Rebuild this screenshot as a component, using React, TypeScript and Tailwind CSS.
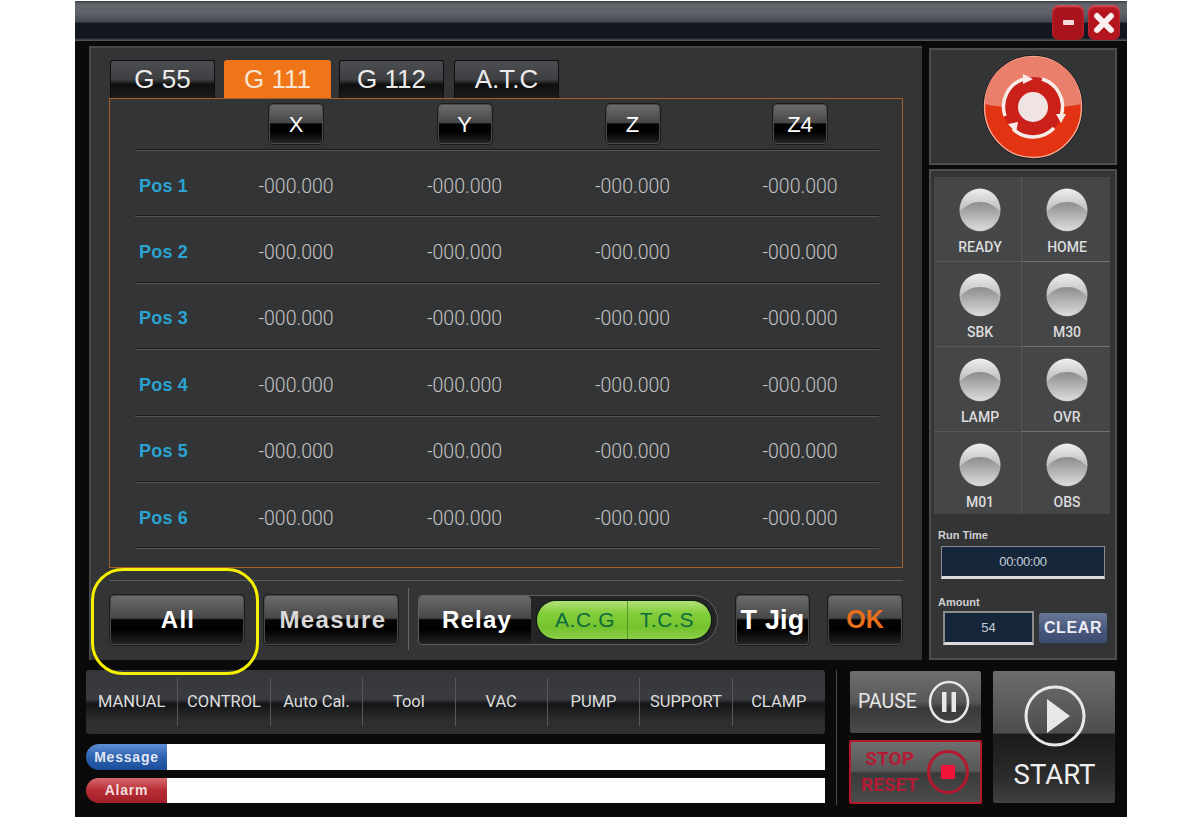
import React from "react";

const gloss =
  "bg-[linear-gradient(#6b6b6b_0%,#474747_46%,#050505_50%,#000_70%,#232323_100%)] border border-[#4a4a4a] shadow-[0_0_0_1px_#1c1c1c] rounded-[4px] text-white font-bold flex items-center justify-center";
const arial = "font-['Liberation_Sans',Arial,sans-serif]";
const roboto = "font-['Roboto','Liberation_Sans',sans-serif]";

function Led() {
  return (
    <svg width="42" height="44" viewBox="0 0 42 44" className="block">
      <defs>
        <linearGradient id="ledA" x1="0" y1="0" x2="0" y2="1">
          <stop offset="0" stopColor="#efefef" />
          <stop offset="1" stopColor="#8d8d8d" />
        </linearGradient>
        <linearGradient id="ledB" x1="0" y1="0" x2="0" y2="1">
          <stop offset="0" stopColor="#8c8c8c" />
          <stop offset="1" stopColor="#dddddd" />
        </linearGradient>
      </defs>
      <ellipse cx="21" cy="22" rx="20.5" ry="21.5" fill="url(#ledA)" />
      <path d="M1 24 C7 17 13 14 21 14 C29 14 35 17 41 24 C40 35 31 43 21 43 C11 43 2 35 1 24 Z" fill="url(#ledB)" />
    </svg>
  );
}

function Logo() {
  return (
    <svg width="102" height="106" viewBox="0 0 102 106" className="block">
      <ellipse cx="51" cy="53" rx="50" ry="52" fill="#111" />
      <ellipse cx="51" cy="53" rx="48.5" ry="50.5" fill="#e23412" stroke="#f3a58f" strokeWidth="1.5" />
      <path d="M3 50 C3 22 24 3 51 3 C78 3 99 22 99 50 C85 54 68 52 51 52 C34 52 17 54 3 50 Z" fill="#ea7f6c" />
      <circle cx="51" cy="53" r="30" fill="#c9201a" />
      <g fill="none" stroke="#f7ece8" strokeWidth="3.5">
        <path d="M23 62 A 29 29 0 0 1 42 25" />
        <path d="M60 25 A 29 29 0 0 1 79 62" />
        <path d="M72 74 A 29 29 0 0 1 31 75" />
      </g>
      <g fill="#f7ece8">
        <path d="M41 20 L51 25 L41 30 Z" />
        <path d="M74 60 L84 60 L79 69 Z" />
        <path d="M26 70 L36 68 L34 79 Z" />
      </g>
      <circle cx="51" cy="53" r="15" fill="#f0e4e2" />
    </svg>
  );
}

const rows = ["Pos 1", "Pos 2", "Pos 3", "Pos 4", "Pos 5", "Pos 6"];
const lights = ["READY", "HOME", "SBK", "M30", "LAMP", "OVR", "M01", "OBS"];
const nav = ["MANUAL", "CONTROL", "Auto Cal.", "Tool", "VAC", "PUMP", "SUPPORT", "CLAMP"];
const tabs = [
  { t: "G 55", c: "w-[105px]", on: false },
  { t: "G 111", c: "w-[107px] ml-[9px]", on: true },
  { t: "G 112", c: "w-[105px] ml-[8px]", on: false },
  { t: "A.T.C", c: "w-[105px] ml-[10px]", on: false },
];

export default function App() {
  return (
    <div className={`relative w-[1200px] h-[818px] bg-white overflow-hidden pt-px pl-[75px] ${arial}`}>
      <div className="w-[1052px] h-[816px] bg-[#0a0a0a] flex flex-col">
        {/* title bar */}
        <div className="h-[40px] shrink-0 flex justify-end items-start gap-[4px] pr-[7px] pt-[4px] bg-[linear-gradient(#3a3d42_0%,#62666c_8%,#5e6269_30%,#454950_52%,#141820_56%,#12161d_92%,#5c5f63_100%)]">
          <div className="w-[32px] h-[35px] rounded-[7px] bg-[#a9141c] flex items-center justify-center shadow-[inset_0_2px_2px_#d6525a]">
            <div className="w-[11px] h-[5px] bg-[#f2dcdc] rounded-[1px]" />
          </div>
          <div className="w-[32px] h-[35px] rounded-[7px] bg-[#b3161e] flex items-center justify-center shadow-[inset_0_2px_2px_#d6525a]">
            <svg width="22" height="22" viewBox="0 0 22 22"><path d="M4 4 L18 18 M18 4 L4 18" stroke="#fbeeee" strokeWidth="6" strokeLinecap="round" /></svg>
          </div>
        </div>

        {/* main */}
        <div className="flex pt-[5px] pl-[14px]">
          <div className="w-[833px] h-[614px] bg-[#333435] border-t-2 border-l-2 border-[#46484a] pt-[12px] px-[18px]">
            <div className="flex pl-px h-[38px]">
              {tabs.map((t) => (
                <div
                  key={t.t}
                  className={`${t.c} flex items-center justify-center text-[26px] rounded-t-[3px] ${
                    t.on
                      ? "bg-[#ef7518] text-[#f7e6d2]"
                      : "bg-[linear-gradient(#4c4e52_0%,#3d3f42_50%,#0e0e0e_64%,#1d1d1d_100%)] border border-b-0 border-[#0d0d0d] text-[#ececec]"
                  }`}
                >
                  {t.t}
                </div>
              ))}
            </div>
            <div className="w-[794px] h-[470px] border border-[#a4602c] pl-[25px] pr-[23px]">
              <div className="grid grid-cols-[77px_168px_169px_167px_163px] h-[51px] pt-[5px] items-start border-b border-[#1b1b1b] shadow-[0_1px_0_#555]">
                <div />
                {["X", "Y", "Z", "Z4"].map((h, i) => (
                  <div key={h} className={`flex justify-center ${i === 3 ? "pl-[5px]" : ""}`}>
                    <div className={`${gloss} w-[54px] h-[40px] text-[22px] !font-normal`}>{h}</div>
                  </div>
                ))}
              </div>
              {rows.map((r) => (
                <div
                  key={r}
                  className="grid grid-cols-[77px_168px_169px_167px_163px] h-[66.4px] items-center pt-[7px] border-b border-[#1b1b1b] shadow-[0_1px_0_#555]"
                >
                  <div className="pl-[4px] text-[18px] font-bold tracking-[0.2px] text-[#2aa3d2]">{r}</div>
                  {[0, 1, 2, 3].map((i) => (
                    <div key={i} className={`${roboto} font-light text-center text-[19.5px] text-[#c4c4c4] ${i === 3 ? "pl-[5px]" : ""}`}>
                      -000.000
                    </div>
                  ))}
                </div>
              ))}
            </div>
            <div className="w-[794px] mt-[12px] border-t border-[#5b5b5b] pt-[14px] flex items-start h-[70px]">
              <div className={`${gloss} ml-px w-[134px] h-[50px] text-[24px] tracking-[1.2px] pl-[2px]`}>All</div>
              <div className={`${gloss} ml-[20px] w-[134px] h-[50px] text-[24px] tracking-[1.4px] pl-[4px] !text-[#d8d8d8]`}>Measure</div>
              <div className="ml-[10px] w-px h-[62px] -mt-[7px] bg-[#666]" />
              <div className="ml-[9px] w-[300px] h-[50px] flex rounded-[4px] rounded-r-[25px] border border-[#5d6063] bg-[#232527]">
                <div className={`${gloss} !border-0 !shadow-none w-[112px] text-[24px] tracking-[1.2px] pl-[4px]`}>Relay</div>
                <div className="ml-[6px] w-[174px] h-[38px] mt-[5px] flex rounded-[19px] overflow-hidden text-[21px] tracking-[0.6px] text-[#0c6b3c] bg-[linear-gradient(#b4e07a_0%,#86cf3e_30%,#74c22e_70%,#8fd04a_100%)] shadow-[0_0_0_1px_#0e1c10]">
                  <div className="w-[91px] flex items-center justify-center pl-[6px] border-r border-[#4d9a2c]">A.C.G</div>
                  <div className="flex-1 flex items-center justify-center pr-[5px]">T.C.S</div>
                </div>
              </div>
              <div className={`${gloss} ml-[18px] w-[73px] h-[50px] text-[27px] tracking-[0.2px]`}>T Jig</div>
              <div className={`${gloss} ml-[19px] w-[74px] h-[50px] text-[25px] !text-[#e8701c]`}>OK</div>
            </div>
          </div>

          {/* right column */}
          <div className="ml-[7px] w-[188px] pt-[2px]">
            <div className="h-[117px] bg-[#333435] border-2 border-[#4b4d4f] flex items-center justify-center pl-[20px]">
              <Logo />
            </div>
            <div className="mt-[4px] h-[491px] bg-[#333435] border-2 border-[#4b4d4f] pt-[6px] pl-[3px] relative">
              <div className="w-[176px] h-[337px] bg-[#454648] grid grid-cols-2 grid-rows-[85px_85px_85px_82px]">
                {lights.map((l, i) => (
                  <div
                    key={l}
                    className={`flex flex-col items-center pt-[11px] ${i % 2 === 0 ? "border-r border-[#57585a] pl-[5px]" : "pl-[2px]"} ${i < 6 ? "border-b border-[#6f7173]" : ""}`}
                  >
                    <Led />
                    <div className={`${roboto} font-medium text-[14px] leading-[16px] mt-[7px] text-[#dcdcdc]`}>{l}</div>
                  </div>
                ))}
              </div>
              <div className="pl-[4px] mt-[14px] text-[11px] leading-[14px] font-bold text-[#cfcfcf]">Run Time</div>
              <div className="ml-[7px] mt-[4px] w-[164px] h-[33px] bg-[#15263a] border border-[#8b8b8b] border-b-[3px] border-b-[#dadada] flex items-center justify-center text-[13px] text-[#c6ced6] tracking-[-0.4px]">
                00:00:00
              </div>
              <div className="pl-[4px] mt-[16px] text-[11px] leading-[14px] font-bold text-[#cfcfcf]">Amount</div>
              <div className="flex items-center ml-[9px] mt-[2px]">
                <div className="w-[91px] h-[34px] bg-[#15263a] border-2 border-[#8b8b8b] border-b-[3px] border-b-[#dadada] flex items-center justify-center text-[13px] text-[#c6ced6]">
                  54
                </div>
                <div className="ml-[5px] w-[68px] h-[30px] rounded-[3px] bg-[linear-gradient(#6a7898_0%,#4a5a80_50%,#3d4c70_100%)] flex items-center justify-center text-[16px] font-bold tracking-[0.6px] text-[#ececf2]">
                  CLEAR
                </div>
              </div>
            </div>
          </div>
        </div>

        {/* bottom */}
        <div className="flex pl-[11px] pt-[10px]">
          <div className="w-[739px]">
            <div className={`${roboto} h-[64px] rounded-[3px] grid grid-cols-8 py-[8px] text-[16.5px] text-[#dedede] bg-[linear-gradient(#343639_0%,#3a3c40_45%,#141517_53%,#2c2e30_80%,#2e2f31_100%)]`}>
              {nav.map((n, i) => (
                <div key={n} className={`flex items-center justify-center ${i < 7 ? "border-r border-[#55575a]" : ""}`}>
                  {n}
                </div>
              ))}
            </div>
            <div className="mt-[10px] h-[26px] flex">
              <div className="w-[81px] rounded-l-[13px] flex items-center justify-center text-[14px] font-bold tracking-[0.8px] text-[#e2e6f0] bg-[linear-gradient(#5f8fd6_0%,#2c62b0_50%,#1c4c98_100%)]">
                Message
              </div>
              <div className="flex-1 bg-white" />
            </div>
            <div className="mt-[8px] h-[25px] flex">
              <div className="w-[81px] rounded-l-[13px] flex items-center justify-center text-[14px] font-bold tracking-[0.8px] text-[#f2dede] bg-[linear-gradient(#d66a6e_0%,#b82c34_50%,#a0202a_100%)]">
                Alarm
              </div>
              <div className="flex-1 bg-white" />
            </div>
          </div>
          <div className="ml-[11px] w-px h-[135px] bg-[#4a4a4a]" />
          <div className={`${roboto} ml-[12px] w-[133px]`}>
            <div className="mx-px mt-px h-[62px] rounded-[2px] flex items-center gap-[11px] pl-[8px] text-[19.5px] text-[#e8e8e8] bg-[linear-gradient(#6f6f6f_0%,#575757_50%,#3a3a3a_60%,#4a4a4a_100%)]">
              PAUSE
              <svg width="42" height="44" viewBox="0 0 42 44">
                <ellipse cx="21" cy="22" rx="19" ry="20" fill="none" stroke="#e8e8e8" strokeWidth="2.5" />
                <rect x="14" y="12" width="4.5" height="20" fill="#e8e8e8" />
                <rect x="23.5" y="12" width="4.5" height="20" fill="#e8e8e8" />
              </svg>
            </div>
            <div className="mt-[7px] h-[64px] border-2 border-[#b5182c] rounded-[2px] flex items-center gap-[8px] pl-[10px] bg-[linear-gradient(#6f6f6f_0%,#575757_48%,#3a3a3a_52%,#4c4c4c_100%)]">
              <div className="text-[19px] leading-[26px] font-bold text-center text-[#b31c34]">
                STOP
                <br />
                RESET
              </div>
              <svg width="44" height="46" viewBox="0 0 44 46">
                <ellipse cx="22" cy="23" rx="19.5" ry="20.5" fill="none" stroke="#b5182c" strokeWidth="3" />
                <rect x="15" y="16" width="14" height="14" fill="#ef1438" />
              </svg>
            </div>
          </div>
          <div className={`${roboto} ml-[11px] mt-px w-[122px] h-[132px] rounded-[2px] flex flex-col items-center pt-[14px] pl-[1px] text-[27.5px] text-[#eeeeee] bg-[linear-gradient(#6c6c6c_0%,#4d4d4d_47%,#1b1b1b_48%,#2b2b2b_80%,#404040_100%)]`}>
            <svg width="62" height="62" viewBox="0 0 62 62">
              <circle cx="31" cy="31" r="29" fill="none" stroke="#e8e8e8" strokeWidth="3" />
              <path d="M23 14 L46 31 L23 48 Z" fill="#e8e8e8" />
            </svg>
            <div className="mt-[12px] leading-[32px]">START</div>
          </div>
        </div>
      </div>

      {/* annotation */}
      <div className="absolute left-[91px] top-[568px] w-[168px] h-[107px] rounded-[32px] border-[3px] border-[#f6f000]" />
    </div>
  );
}
